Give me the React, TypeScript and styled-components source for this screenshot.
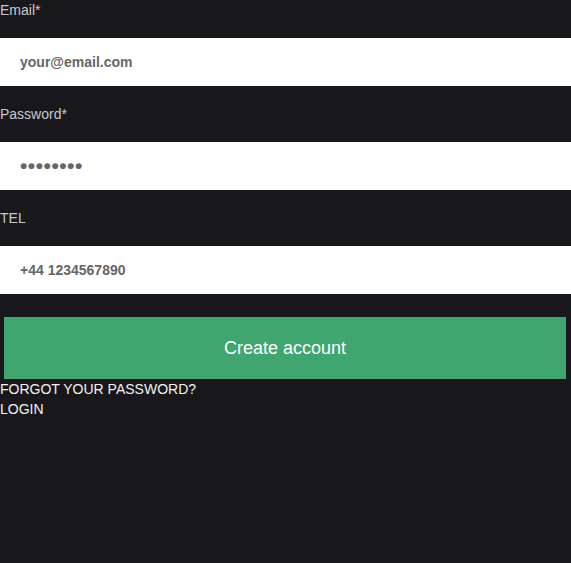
import styled, { createGlobalStyle } from 'styled-components';

const GlobalStyle = createGlobalStyle`
  html, body {
    margin: 0;
    padding: 0;
    background: #18171c;
    height: 100%;
  }
  #root {
    min-height: 100%;
  }
`;

const StyledPage = styled.div`
  min-height: 563px;
  background: #18171c;
  font-family: 'Liberation Sans', Arial, sans-serif;
  display: flex;
  flex-direction: column;
`;

const StyledForm = styled.form`
  display: flex;
  flex-direction: column;
  margin: 0;
`;

const StyledLabel = styled.label`
  display: block;
  font-size: 14px;
  line-height: 20px;
  color: #c9c9cc;
  margin-bottom: 18px;
`;

const StyledInput = styled.input<{ $masked?: boolean }>`
  display: block;
  box-sizing: border-box;
  width: 100%;
  height: 48px;
  margin: 0 0 18px;
  padding: 0 20px;
  border: none;
  outline: none;
  background: #fff;
  font-family: 'Liberation Sans', Arial, sans-serif;
  font-size: ${(p) => (p.$masked ? '21px' : '14px')};
  letter-spacing: ${(p) => (p.$masked ? '0.5px' : 'normal')};
  font-weight: bold;
  color: #666;

  &::placeholder {
    color: #666;
    opacity: 1;
  }
`;

const StyledButton = styled.button`
  display: block;
  height: 62px;
  margin: 5px 5px 0 4px;
  border: none;
  background: #3fa66f;
  color: #fff;
  font-family: 'Liberation Sans', Arial, sans-serif;
  font-size: 18px;
  cursor: pointer;
`;

const StyledLinks = styled.div`
  display: flex;
  flex-direction: column;
  align-items: flex-start;
`;

const StyledLink = styled.a`
  font-size: 14px;
  line-height: 20px;
  color: #f2f2f2;
  text-decoration: none;
  text-transform: uppercase;
`;

export default function App() {
  return (
    <>
      <GlobalStyle />
      <StyledPage>
        <StyledForm onSubmit={(e) => e.preventDefault()}>
          <StyledLabel htmlFor="email">Email*</StyledLabel>
          <StyledInput id="email" type="email" placeholder="your@email.com" />
          <StyledLabel htmlFor="password">Password*</StyledLabel>
          <StyledInput id="password" type="password" defaultValue="12345678" $masked />
          <StyledLabel htmlFor="tel">TEL</StyledLabel>
          <StyledInput id="tel" type="tel" placeholder="+44 1234567890" />
          <StyledButton type="submit">Create account</StyledButton>
        </StyledForm>
        <StyledLinks>
          <StyledLink href="#">Forgot your password?</StyledLink>
          <StyledLink href="#">Login</StyledLink>
        </StyledLinks>
      </StyledPage>
    </>
  );
}
